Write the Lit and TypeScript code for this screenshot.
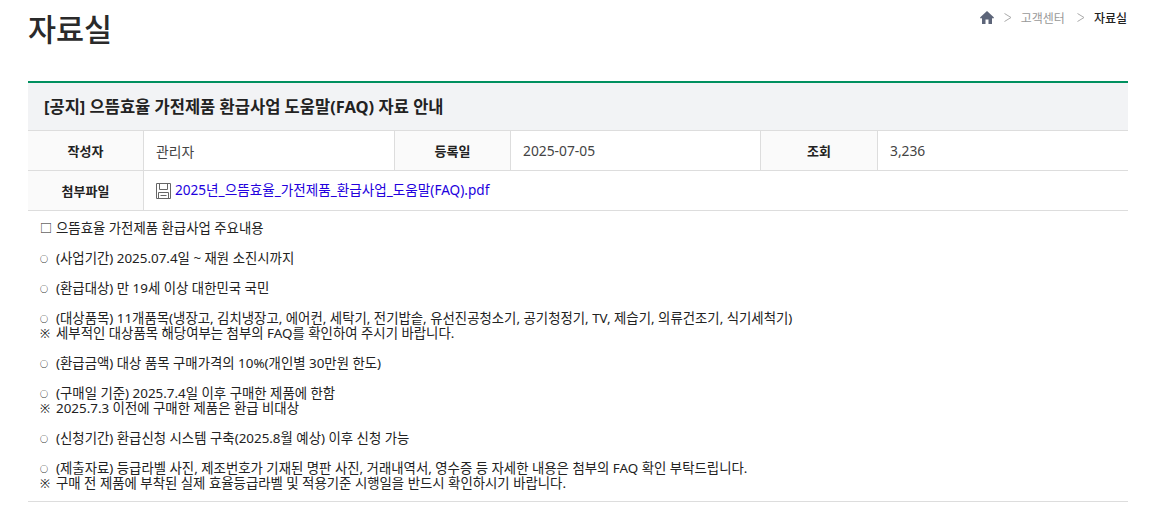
import { LitElement, html, css } from "lit";
import { customElement } from "lit/decorators.js";

// [bullet, text]; empty line = spacer
const lines = [
  ["□", "으뜸효율 가전제품 환급사업 주요내용"],
  [],
  ["○", "(사업기간) 2025.07.4일 ~ 재원 소진시까지"],
  [],
  ["○", "(환급대상) 만 19세 이상 대한민국 국민"],
  [],
  ["○", "(대상품목) 11개품목(냉장고, 김치냉장고, 에어컨, 세탁기, 전기밥솥, 유선진공청소기, 공기청정기, TV, 제습기, 의류건조기, 식기세척기)"],
  ["※", "세부적인 대상품목 해당여부는 첨부의 FAQ를 확인하여 주시기 바랍니다."],
  [],
  ["○", "(환급금액) 대상 품목 구매가격의 10%(개인별 30만원 한도)"],
  [],
  ["○", "(구매일 기준) 2025.7.4일 이후 구매한 제품에 한함"],
  ["※", "2025.7.3 이전에 구매한 제품은 환급 비대상"],
  [],
  ["○", "(신청기간) 환급신청 시스템 구축(2025.8월 예상) 이후 신청 가능"],
  [],
  ["○", "(제출자료) 등급라벨 사진, 제조번호가 기재된 명판 사진, 거래내역서, 영수증 등 자세한 내용은 첨부의 FAQ 확인 부탁드립니다."],
  ["※", "구매 전 제품에 부착된 실제 효율등급라벨 및 적용기준 시행일을 반드시 확인하시기 바랍니다."],
];

@customElement("app-root")
export class AppRoot extends LitElement {
  static styles = css`
    :host {
      display: block;
      padding: 0 31px 0 28px;
      font-family: "Noto Sans", "Noto Sans CJK KR", sans-serif;
      color: #222;
      background: #fff;
    }
    .head {
      display: flex;
      justify-content: space-between;
      height: 81px;
    }
    h1 {
      margin: 0;
      font-size: 30.5px;
      font-weight: 500;
      line-height: 58px;
      color: #2a2a2a;
    }
    .crumb {
      display: flex;
      align-items: center;
      height: 35px;
      padding-right: 1px;
      font-size: 12px;
      color: #999;
    }
    .crumb svg.home {
      width: 14px;
      height: 13px;
      margin-right: 10px;
    }
    .crumb svg.sep {
      width: 8px;
      height: 9px;
      margin-right: 9px;
    }
    .crumb .mid {
      margin-right: 12px;
    }
    .crumb b {
      font-weight: 500;
      color: #222;
    }
    .view {
      border-top: 2px solid #00905f;
      border-bottom: 1px solid #ddd;
    }
    .title {
      height: 47px;
      line-height: 47px;
      padding-left: 16px;
      background: #f2f3f5;
      border-bottom: 1px solid #ddd;
      font-size: 16.5px;
      font-weight: 700;
      color: #222;
    }
    .row {
      display: grid;
      grid-template-columns: 115px 251px 116px 250px 117px 1fr;
      height: 39px;
      border-bottom: 1px solid #ddd;
      font-size: 13.8px;
    }
    .row > div {
      display: flex;
      align-items: center;
      padding-left: 12px;
      border-left: 1px solid #ddd;
      color: #444;
    }
    .row > .th {
      justify-content: center;
      padding-left: 0;
      background: #fafafa;
      font-size: 13px;
      font-weight: 700;
      color: #222;
    }
    .row > .th:first-child {
      border-left: 0;
    }
    .file {
      grid-column: 2 / -1;
    }
    .file a {
      position: relative;
      top: -2px;
      color: #2200dd;
      text-decoration: none;
      font-size: 13.6px;
    }
    .file svg {
      width: 15px;
      height: 16px;
      margin-right: 4px;
    }
    .body {
      padding: 10px 12px;
      font-size: 13.4px;
      line-height: 15px;
      color: #222;
    }
    .line {
      display: flex;
      height: 15px;
      white-space: nowrap;
    }
    .mark {
      flex: none;
      width: 16px;
      font-size: 12px;
    }
    .mark.circle {
      font-size: 8px;
      font-weight: 700;
      color: #000;
    }
  `;

  render() {
    return html`
      <div class="head">
        <h1>자료실</h1>
        <div class="crumb">
          <svg class="home" viewBox="0 0 14 13">
            <path fill="#5d6579" d="M7 0 0 6.5 1 7.7 2 6.8V13H5.5V8.5H8.5V13H12V6.8L13 7.7 14 6.5Z" />
          </svg>
          <svg class="sep" viewBox="0 0 8 9">
            <path fill="none" stroke="#aaa" stroke-width="1" d="M.5 .5 7 4.5 .5 8.5" />
          </svg>
          <span class="mid">고객센터</span>
          <svg class="sep" viewBox="0 0 8 9">
            <path fill="none" stroke="#aaa" stroke-width="1" d="M.5 .5 7 4.5 .5 8.5" />
          </svg>
          <b>자료실</b>
        </div>
      </div>
      <div class="view">
        <div class="title">[공지] 으뜸효율 가전제품 환급사업 도움말(FAQ) 자료 안내</div>
        <div class="row">
          <div class="th">작성자</div>
          <div>관리자</div>
          <div class="th">등록일</div>
          <div>2025-07-05</div>
          <div class="th">조회</div>
          <div>3,236</div>
        </div>
        <div class="row">
          <div class="th">첨부파일</div>
          <div class="file">
            <svg viewBox="0 0 15 16">
              <path fill="none" stroke="#666" d="M.5 .5H14.5V15.5H.5ZM3.5 .5V6.5H11.5V.5M2.5 15.5V9.5H12.5V15.5M4.5 12.5H10.5" />
            </svg>
            <a href="#">2025년_으뜸효율_가전제품_환급사업_도움말(FAQ).pdf</a>
          </div>
        </div>
        <div class="body">
          ${lines.map(
            ([m, t]) => html`<div class="line">
              ${m ? html`<span class="mark ${m === "○" ? "circle" : ""}">${m}</span><span>${t}</span>` : ""}
            </div>`
          )}
        </div>
      </div>
    `;
  }
}
